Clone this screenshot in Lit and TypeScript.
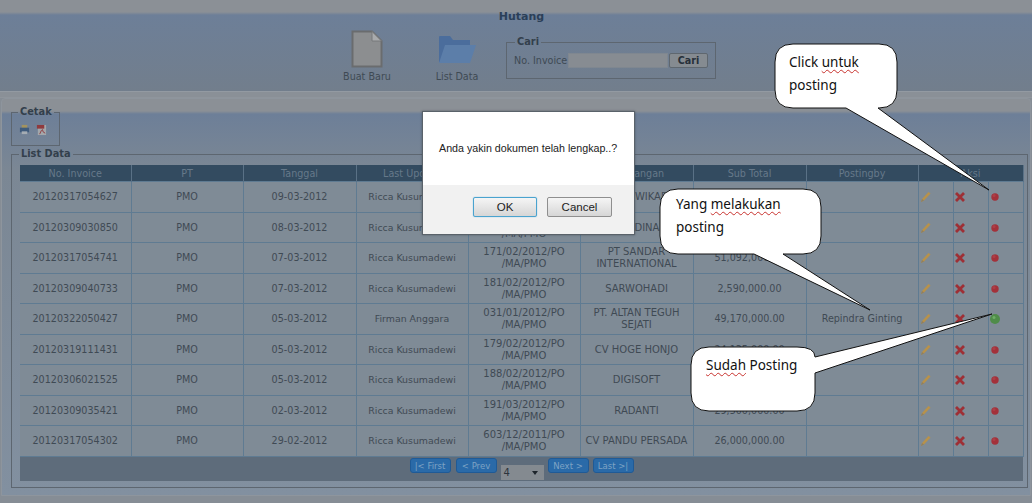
import { html, css, LitElement, svg } from 'lit';
import { customElement } from 'lit/decorators.js';

interface Row {
    invoice: string;
    date: string;
    user: string;
    po: string;
    note: string;
    total: string;
    by: string;
    posted?: boolean;
}

const ROWS: Row[] = [
    { invoice: '20120317054627', date: '09-03-2012', user: 'Ricca Kusumadewi', po: '169/02/2012/PO /MA/PMO', note: 'PT GITA WIKARYA', total: '12,400,000.00', by: '' },
    { invoice: '20120309030850', date: '08-03-2012', user: 'Ricca Kusumadewi', po: '175/02/2012/PO /MA/PMO', note: 'PT DUTA DINAMIKA', total: '8,250,000.00', by: '' },
    { invoice: '20120317054741', date: '07-03-2012', user: 'Ricca Kusumadewi', po: '171/02/2012/PO /MA/PMO', note: 'PT SANDAR INTERNATIONAL', total: '51,092,000.00', by: '' },
    { invoice: '20120309040733', date: '07-03-2012', user: 'Ricca Kusumadewi', po: '181/02/2012/PO /MA/PMO', note: 'SARWOHADI', total: '2,590,000.00', by: '' },
    { invoice: '20120322050427', date: '05-03-2012', user: 'Firman Anggara', po: '031/01/2012/PO /MA/PMO', note: 'PT. ALTAN TEGUH SEJATI', total: '49,170,000.00', by: 'Repindra Ginting', posted: true },
    { invoice: '20120319111431', date: '05-03-2012', user: 'Ricca Kusumadewi', po: '179/02/2012/PO /MA/PMO', note: 'CV HOGE HONJO', total: '24,135,000.00', by: '' },
    { invoice: '20120306021525', date: '05-03-2012', user: 'Ricca Kusumadewi', po: '188/02/2012/PO /MA/PMO', note: 'DIGISOFT', total: '6,300,000.00', by: '' },
    { invoice: '20120309035421', date: '02-03-2012', user: 'Ricca Kusumadewi', po: '191/03/2012/PO /MA/PMO', note: 'RADANTI', total: '29,500,000.00', by: '' },
    { invoice: '20120317054302', date: '29-02-2012', user: 'Ricca Kusumadewi', po: '603/12/2011/PO /MA/PMO', note: 'CV PANDU PERSADA', total: '26,000,000.00', by: '' },
];

const COLUMNS = ['No. Invoice', 'PT', 'Tanggal', 'Last Update', 'No. PO', 'Keterangan', 'Sub Total', 'Postingby'];

const pencil = svg`<svg class="ico pencil" viewBox="0 0 12 12"><path d="M1 11 L2 8 L8.500 1 L10.500 2.500 L4 9.500 Z" fill="#b8924a"/><path d="M1 11 L2 8 L4 9.500 Z" fill="#8c7f62"/></svg>`;
const cross = svg`<svg class="ico" viewBox="0 0 12 12"><path d="M2 2 L10 10 M10 2 L2 10" stroke="#9e2f35" stroke-width="2.800"/></svg>`;
const dot = (green: boolean) => svg`<svg class="ico" viewBox="0 0 12 12"><circle cx="6" cy="6" r="${green ? 5 : 3.700}" fill="${green ? '#4f8c49' : '#a3313a'}"/><circle cx="5" cy="4.500" r="1.500" fill="${green ? '#6fae66' : '#ad3f47'}"/></svg>`;

@customElement('app-root')
export class AppRoot extends LitElement {
    static styles = css`
        :host {
            display: block;
            position: relative;
            width: 1032px;
            height: 503px;
            overflow: hidden;
            background: #868d95;
            font-family: "DejaVu Sans", sans-serif;
            font-size: 9.6px;
            color: #3f4a54;
        }
        .top {
            height: 92px;
            box-sizing: border-box;
            padding-top: 11px;
            background: linear-gradient(#8b9096 0, #8b9096 12px, #6d7f98 15px, #727e8c 92px);
            border-bottom: 1px solid #939aa2;
        }
        .top h1 {
            margin: 0;
            font-size: 11px;
            line-height: 12px;
            text-align: center;
            padding-left: 11px;
            color: #2b3f58;
        }
        .tools {
            display: flex;
            align-items: flex-start;
            margin: 7px 0 0 344px;
        }
        .tool {
            width: 46px;
            display: flex;
            flex-direction: column;
            align-items: center;
            height: 52px;
            justify-content: flex-end;
            gap: 3px;
            white-space: nowrap;
        }
        .tool.folder { margin-left: 44px; }
        .tool.folder svg { margin-bottom: 5px; }
        .tool svg { display: block; flex: none; }
        .search {
            margin: 7px 0 0 26px;
            width: 210px;
            height: 42px;
            box-sizing: border-box;
            border: 1px solid #5d6670;
            padding: 6px 0 0 7px;
            display: flex;
            flex-wrap: wrap;
            align-content: flex-start;
            align-items: center;
        }
        legend {
            padding: 0 2px;
            font-weight: bold;
            font-size: 9.800px;
            line-height: 10px;
            color: #333f4c;
            margin-left: -1px;
        }
        .search legend { margin-left: 1px; }
        .search input {
            width: 100px;
            height: 15px;
            box-sizing: border-box;
            border: 1px solid #7f8790;
            background: #878c92;
            padding: 0;
            margin: 0;
        }
        .search label { width: 54px; white-space: nowrap; }
        .search button {
            margin-left: 1px;
            width: 39px;
            height: 15px;
            padding: 0;
            border: 1px solid #5f676f;
            border-radius: 2px;
            background: #858b91;
            color: #27303a;
            font: bold 9.600px "DejaVu Sans", sans-serif;
        }
        .sep {
            height: 5px;
            background: #8a9097;
            border-bottom: 1px solid #8f959c;
        }
        .main {
            height: 398px;
            box-sizing: border-box;
            margin: 0 1px;
            padding: 8px 4px 0 9px;
            border: 1px solid #8e959d;
            border-radius: 4px 4px 0 0;
            background: linear-gradient(#8b9096 0, #8b9096 12px, #6d7f98 15px, #7b8794 70px, #8290a0 100%);
        }
        fieldset {
            margin: 0;
            border: 1px solid #5d6670;
        }
        .print {
            width: 49px;
            height: 39px;
            box-sizing: border-box;
            padding: 0 0 0 7px;
            display: flex;
        }
        .print-icons { display: flex; gap: 6px; padding-top: 7px; }
        .data {
            width: 1016px;
            height: 339px;
            box-sizing: border-box;
            margin-top: 3px;
            padding: 6px 3px 0 8px;
        }
        table {
            width: 1003px;
            border-collapse: collapse;
            table-layout: fixed;
        }
        th {
            height: 16px;
            padding: 0;
            background: #334b60;
            color: #66798a;
            font-weight: normal;
            border-right: 1px solid #5a7186;
        }
        td {
            height: 30px;
            padding: 0;
            background: #7f8b96;
            text-align: center;
            line-height: 12px;
            border: 1px solid #5f7b92;
            border-left: 0;
        }
        tbody tr:nth-child(even) td { height: 29px; }
        td.user { font-size: 9.400px; }
        td.wide { font-size: 10px; }
        td.ac svg { display: block; margin: 0; }
        td.ac svg.pencil { margin-left: 1px; }
        .ico { width: 12px; height: 12px; }
        .pager {
            width: 1003px;
            height: 24px;
            background: #5e6c7b;
            display: flex;
            justify-content: center;
            align-items: flex-start;
            gap: 4px;
            padding-top: 1px;
            box-sizing: border-box;
        }
        .pager button {
            width: 41px;
            height: 15px;
            padding: 0;
            border: 1px solid #1f5a96;
            border-radius: 3px;
            background: #2a6aa8;
            color: #7ea3c4;
            font: 8.500px "DejaVu Sans", sans-serif;
            white-space: nowrap;
        }
        .pager button.first { margin-right: 1px; }
        .pager .page {
            width: 43px;
            height: 15px;
            margin-top: 7px;
            box-sizing: border-box;
            padding: 0 6px 0 3px;
            background: #848a90;
            color: #2c343c;
            font-size: 10px;
            display: flex;
            justify-content: space-between;
            align-items: center;
        }
        .pager .caret {
            width: 0;
            height: 0;
            border: 3.500px solid transparent;
            border-top: 4px solid #1d242b;
            border-bottom: 0;
        }
        .dialog {
            position: absolute;
            left: 422px;
            top: 111px;
            width: 213px;
            height: 124px;
            box-sizing: border-box;
            background: #fff;
            border: 1px solid #5a626a;
            box-shadow: 0 0 2px rgba(40, 50, 60, .5);
            display: flex;
            flex-direction: column;
            font-family: "Liberation Sans", Arial, sans-serif;
            font-size: 10.700px;
            color: #222;
        }
        .dialog p {
            margin: 0;
            flex: 1;
            display: flex;
            align-items: center;
            padding-left: 16px;
            padding-bottom: 1px;
        }
        .dialog .actions {
            height: 49px;
            box-sizing: border-box;
            background: #f1f1f1;
            display: flex;
            gap: 10px;
            padding: 12px 0 0 50px;
        }
        .dialog button {
            height: 20px;
            padding: 0;
            border: 1px solid #8f8f8f;
            border-radius: 2px;
            background: linear-gradient(#f5f5f5, #d6d6d6);
            font: 11.500px "Liberation Sans", Arial, sans-serif;
            color: #222;
        }
        .dialog .ok { width: 64px; border-color: #4aa3cf; box-shadow: 0 0 1px #4aa3cf; }
        .dialog .cancel { width: 65px; }
        .shapes {
            position: absolute;
            left: 0;
            top: 0;
        }
        .note {
            position: absolute;
            font-family: "Noto Sans", sans-serif;
            font-size: 13.500px;
            line-height: 23px;
            color: #111;
            white-space: nowrap;
        }
        .note u { text-decoration: underline wavy #c8322e 1px; text-underline-offset: 2px; }
    `;

    private renderRow(r: Row) {
        const [a, b] = r.po.split(' ');
        return html`<tr>
            <td>${r.invoice}</td>
            <td>PMO</td>
            <td>${r.date}</td>
            <td class="user">${r.user}</td>
            <td class="wide">${a}<br />${b}</td>
            <td class="wide">${r.note}</td>
            <td>${r.total}</td>
            <td>${r.by}</td>
            <td class="ac">${pencil}</td>
            <td class="ac">${cross}</td>
            <td class="ac">${dot(!!r.posted)}</td>
        </tr>`;
    }

    render() {
        return html`
            <div class="top">
                <h1>Hutang</h1>
                <div class="tools">
                    <div class="tool">
                        <svg width="32" height="38" viewBox="0 0 32 38"><path d="M1.500 1.500 H21 L30.500 11 V36.500 H1.500 Z" fill="#8c8e90" stroke="#6a6c6e" stroke-width="2"/><path d="M21 1.500 V11 H30.500 Z" fill="#a9abad" stroke="#77797b"/></svg>
                        <span>Buat Baru</span>
                    </div>
                    <div class="tool folder">
                        <svg width="38" height="28" viewBox="0 0 38 28"><path d="M1 27 V2 Q1 1 2 1 H12 L15 5 H32 V27 Z" fill="#4b6d9c"/><path d="M1 28 L7 10 H38 L32 28 Z" fill="#5c7ea9"/></svg>
                        <span>List Data</span>
                    </div>
                    <fieldset class="search">
                        <legend>Cari</legend>
                        <label>No. Invoice</label>
                        <input type="text" />
                        <button>Cari</button>
                    </fieldset>
                </div>
            </div>
            <div class="sep"></div>
            <div class="main">
                <fieldset class="print">
                    <legend>Cetak</legend>
                    <div class="print-icons">
                        <svg width="11" height="11" viewBox="0 0 12 12"><rect x="3" y="1" width="6" height="4" fill="#a3935f"/><rect x="1" y="4" width="10" height="5" fill="#3f5b7c"/><rect x="3" y="8" width="6" height="3" fill="#a5acb3"/></svg>
                        <svg width="11" height="12" viewBox="0 0 12 13"><rect x="2" y="1" width="9" height="11" fill="#a3a7ab"/><rect x="1" y="1" width="8" height="4" fill="#8f3a3e"/><path d="M4 11 Q6 6 7 6 Q7 9 10 10" fill="none" stroke="#8f3a3e"/></svg>
                    </div>
                </fieldset>
                <fieldset class="data">
                    <legend>List Data</legend>
                    <table>
                        <colgroup>
                            <col style="width:111px" /><col style="width:112px" /><col style="width:113px" /><col style="width:112px" />
                            <col style="width:112px" /><col style="width:113px" /><col style="width:113px" /><col style="width:112px" />
                            <col style="width:35px" /><col style="width:35px" /><col style="width:35px" />
                        </colgroup>
                        <thead>
                            <tr>
                                ${COLUMNS.map(c => html`<th>${c}</th>`)}
                                <th colspan="3">Aksi</th>
                            </tr>
                        </thead>
                        <tbody>${ROWS.map(r => this.renderRow(r))}</tbody>
                    </table>
                    <div class="pager">
                        <button class="first">|&lt; First</button>
                        <button>&lt; Prev</button>
                        <div class="page">4<span class="caret"></span></div>
                        <button>Next &gt;</button>
                        <button>Last &gt;|</button>
                    </div>
                </fieldset>
            </div>

            <div class="dialog">
                <p>Anda yakin dokumen telah lengkap..?</p>
                <div class="actions">
                    <button class="ok">OK</button>
                    <button class="cancel">Cancel</button>
                </div>
            </div>

            <svg class="shapes" width="1032" height="503" viewBox="0 0 1032 503">
                <path d="M793 44 H879 Q897 44 897 62 V90 Q897 108 879 108 H878 L989 190 L846 108 H793 Q775 108 775 90 V62 Q775 44 793 44 Z" fill="#fff" stroke="#111" stroke-width="1" />
                <path d="M678 189 H803 Q821 189 821 207 V236 Q821 254 803 254 H783 L870 310 L754 254 H678 Q660 254 660 236 V207 Q660 189 678 189 Z" fill="#fff" stroke="#111" stroke-width="1" />
                <path d="M709 347 H797 Q815 347 815 357 L992 314 L815 373 V393 Q815 411 797 411 H709 Q691 411 691 393 V365 Q691 347 709 347 Z" fill="#fff" stroke="#111" stroke-width="1" />
            </svg>
            <div class="note" style="left:789px;top:51px">Click <u>untuk</u><br />posting</div>
            <div class="note" style="left:676px;top:193px">Yang <u>melakukan</u><br />posting</div>
            <div class="note" style="left:706px;top:354px"><u>Sudah</u> Posting</div>
        `;
    }
}
